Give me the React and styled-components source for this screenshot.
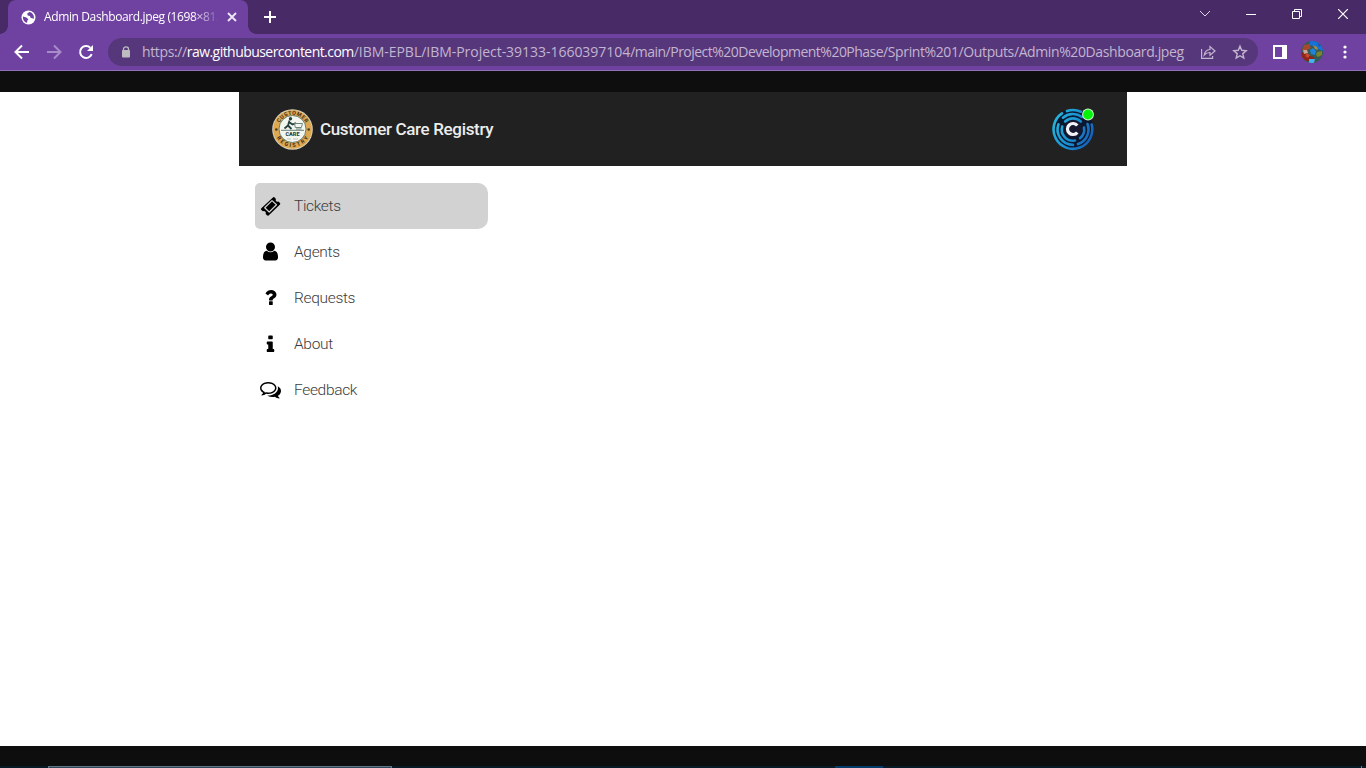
import React from 'react';
import styled, { createGlobalStyle } from 'styled-components';

const GlobalStyle = createGlobalStyle`
  * { box-sizing: border-box; }
  html, body { margin: 0; padding: 0; overflow: hidden; background: #0e0e0e; }
  svg { display: block; flex: none; }
`;

const Screen = styled.div`
  width: 1366px;
  height: 768px;
  display: flex;
  flex-direction: column;
  background: #0e0e0e;
  font-family: 'Open Sans', 'Noto Sans', sans-serif;
`;

const TabStrip = styled.div`
  height: 34px;
  flex: none;
  display: flex;
  align-items: flex-start;
  background: #472a66;
  padding-left: 8px;
`;

const Tab = styled.div`
  position: relative;
  width: 240px;
  height: 34px;
  display: flex;
  align-items: center;
  padding: 0 11px 0 13px;
  border-radius: 8px 8px 0 0;
  background: #6f42a1;

  &::before, &::after {
    content: '';
    position: absolute;
    bottom: 0;
    width: 8px;
    height: 8px;
  }
  &::before { left: -8px; background: radial-gradient(circle at 0 0, transparent 7.5px, #6f42a1 8px); }
  &::after { right: -8px; background: radial-gradient(circle at 100% 0, transparent 7.5px, #6f42a1 8px); }
`;

const TabTitle = styled.div`
  width: 173px;
  margin-left: 8px;
  margin-right: auto;
  overflow: hidden;
  white-space: nowrap;
  font-size: 12px;
  line-height: 18px;
  letter-spacing: -0.38px;
  color: #fff;
  mask-image: linear-gradient(to right, #000 86%, transparent 102%);
`;

const NewTab = styled.div`
  margin: 10px 0 0 15px;
`;

const WindowControls = styled.div`
  display: flex;
  align-items: center;
  margin-left: auto;
  height: 28px;
`;

const ControlButton = styled.div`
  width: 46px;
  display: flex;
  justify-content: center;
`;

const Toolbar = styled.div`
  height: 37px;
  flex: none;
  display: flex;
  align-items: center;
  padding: 0 19px 0 14px;
  background: #6f42a1;
  border-bottom: 1px solid #9270b8;
`;

const NavButtons = styled.div`
  display: flex;
  gap: 16px;
`;

const AddressBar = styled.div`
  width: 1150px;
  flex: none;
  height: 28px;
  margin-left: 14px;
  display: flex;
  align-items: center;
  padding: 0 10px 0 13px;
  border-radius: 14px;
  background: #57377b;
`;

const Url = styled.div`
  flex: 1;
  min-width: 0;
  margin-left: 11px;
  white-space: nowrap;
  font-size: 14px;
  line-height: 20px;
  color: #c2b5d0;
`;

const UrlPart = styled.span`
  letter-spacing: ${(p) => p.$tracking}px;
  color: ${(p) => (p.$host ? '#fff' : 'inherit')};
`;

const AddressActions = styled.div`
  display: flex;
  flex: none;
  gap: 16px;
`;

const ToolbarActions = styled.div`
  display: flex;
  align-items: center;
  margin-left: auto;
`;

const ToolIcon = styled.div`
  margin-left: ${(p) => p.$gap}px;
`;

const Viewport = styled.div`
  height: 654px;
  margin-top: 21px;
  flex: none;
  display: flex;
  justify-content: center;
  background: #fff;
`;

const Dashboard = styled.div`
  width: 888px;
  font-family: Roboto, sans-serif;
`;

const Header = styled.header`
  height: 74px;
  display: flex;
  align-items: center;
  padding: 0 32px 0 33px;
  background: #212121;
`;

const Brand = styled.div`
  margin-left: 7px;
  margin-right: auto;
  font-size: 17px;
  font-weight: 500;
  letter-spacing: -0.34px;
  color: #ececec;
`;

const Sidebar = styled.nav`
  width: 233.4px;
  margin: 17px 0 0 16px;
`;

const NavItem = styled.div`
  height: 46px;
  display: flex;
  align-items: center;
  padding-left: 5px;
  border-radius: 5px 10px 10px 5px;
  background: ${(p) => (p.$active ? '#d2d2d2' : 'transparent')};
  font-size: 15.5px;
  font-weight: 300;
  letter-spacing: -0.33px;
  color: #3c3c3c;
`;

const NavIcon = styled.span`
  padding-bottom: ${(p) => p.$lift}px;
`;

const NavLabel = styled.span`
  margin-left: 13px;
`;

const Taskbar = styled.div`
  height: 2px;
  margin-top: auto;
  display: flex;
  background: #061a28;
`;

const SearchEdge = styled.div`
  width: 344px;
  margin-left: 48px;
  background: #2b485c;
  border: 1px solid #617684;
  border-bottom: 0;
`;

const ActiveTask = styled.div`
  width: 48px;
  margin-left: 443px;
  background: #043c69;
`;

const TaskDivider = styled.div`
  width: 1px;
  margin-left: auto;
  margin-right: 4px;
  background: #71808a;
`;

const glyphs = {
  ticket:
    'M1024 452l316 316-572 572-316-316zM814 1482l668-668q19-19 19-45t-19-45l-362-362q-18-18-45-18t-45 18l-668 668q-19 19-19 45t19 45l362 362q18 18 45 18t45-18zm888-760l-907 908q-37 37-90.5 37t-90.5-37l-126-125q56-56 56-136t-56-136-136-56-136 56l-125-126q-37-37-37-90.5t37-90.5l907-906q37-37 90.5-37t90.5 37l125 125q-56 56-56 136t56 136 136 56 136-56l126 125q37 37 37 90.5t-37 90.5z',
  user:
    'M1536 1399q0 109-62.5 187t-150.5 78h-854q-88 0-150.5-78t-62.5-187q0-85 8.5-160.5t31.5-152 58.5-131 94-89 134.5-34.5q131 128 313 128t313-128q76 0 134.5 34.5t94 89 58.5 131 31.5 152 8.5 160.5zm-256-887q0 159-112.5 271.5t-271.5 112.5-271.5-112.5-112.5-271.5 112.5-271.5 271.5-112.5 271.5 112.5 112.5 271.5z',
  question:
    'M1088 1256v240q0 16-12 28t-28 12h-240q-16 0-28-12t-12-28v-240q0-16 12-28t28-12h240q16 0 28 12t12 28zm316-600q0 54-15.5 101t-35 76.5-55 59.5-57.5 43.5-61 35.5q-41 23-68.5 65t-27.5 67q0 17-12 32.5t-28 15.5h-240q-15 0-25.5-18.5t-10.5-37.5v-45q0-83 65-156.5t143-108.5q59-27 84-56t25-76q0-42-46.5-74t-107.5-32q-65 0-108 29-35 25-107 115-13 16-31 16-12 0-25-8l-164-125q-13-10-15.5-25t5.5-28q160-266 464-266 80 0 161 31t146 83 106 127.5 41 158.5z',
  info:
    'M1216 1344v128q0 26-19 45t-45 19h-512q-26 0-45-19t-19-45v-128q0-26 19-45t45-19h64v-384h-64q-26 0-45-19t-19-45v-128q0-26 19-45t45-19h384q26 0 45 19t19 45v576h64q26 0 45 19t19 45zm-128-1152v192q0 26-19 45t-45 19h-256q-26 0-45-19t-19-45v-192q0-26 19-45t45-19h256q26 0 45 19t19 45z',
  comments:
    'M704 384q-153 0-286 52t-211.5 141-78.5 191q0 82 53 158t149 132l97 56-35 84q34-20 62-39l44-31 53 10q78 14 153 14 153 0 286-52t211.5-141 78.5-191-78.5-191-211.5-141-286-52zm0-128q191 0 353.5 68.5t256.5 186.5 94 257-94 257-256.5 186.5-353.5 68.5q-86 0-176-16-124 88-278 128-36 9-86 16h-3q-11 0-20.5-8t-11.5-21q-1-3-1-6.5t.5-6.5 2-6l2.5-5 3.5-5.5 4-5 4.5-5 4-4.5q5-6 23-25t26-29.5 22.5-29 25-38.5 20.5-44q-124-72-195-177t-71-224q0-139 94-257t256.5-186.500 353.5-68.500zm822 1169q10 24 20.5 44t25 38.5 22.5 29 26 29.5 23 25q1 1 4 4.500t4.500 5 4 5 3.500 5.500l2.500 5 2 6 .5 6.500-1 6.500q-3 14-13 22t-22 7q-50-7-86-16-154-40-278-128-90 16-176 16-271 0-472-132 58 4 88 4 161 0 309-45t264-129q125-92 192-212t67-254q0-77-23-152 129 71 204 178t75 230q0 120-71 224.500t-195 176.500z',
};

const items = [
  { icon: 'ticket', label: 'Tickets', lift: 0 },
  { icon: 'user', label: 'Agents', lift: 1 },
  { icon: 'question', label: 'Requests', lift: 1 },
  { icon: 'info', label: 'About', lift: 0 },
  { icon: 'comments', label: 'Feedback', lift: 1 },
];

const TicketGlyph = () => (
  <svg width="21" height="21" viewBox="0 0 21 21">
    <path
      d="M13.200 1.300Q14 .8 14.700 1.500L15.900 2.900Q15.300 4.600 16.500 5.400 17.500 6 18.500 5.500L20 7Q20.600 7.700 20 8.500L8.600 19.400Q7.800 20 7 19.300L5.700 18Q6.200 16.600 5.200 15.600 4.200 14.800 2.800 15.300L1.200 13.800Q.5 13 1.300 12.200z"
      fill="#000"
    />
    <path d="M12 4.600 16.500 8.800 9.200 16 4.700 11.800z" fill="none" stroke="#d2d2d2" strokeWidth="1.200" strokeLinejoin="round" />
  </svg>
);

const NavGlyph = ({ name, lift }) => (
  <NavIcon $lift={lift}>
    {name === 'ticket' ? (
      <TicketGlyph />
    ) : (
      <svg width="21" height="21" viewBox="0 0 1792 1792">
        <path d={glyphs[name]} fill="#000" />
      </svg>
    )}
  </NavIcon>
);

const GlobeIcon = () => (
  <svg width="15" height="15" viewBox="0 0 15 15">
    <circle cx="7.5" cy="7.5" r="7" fill="#fff" />
    <path d="M2 6.500 5.300 7.400 7.400 9.200 6.400 10.600 6 13C3 12 1.600 9.500 2 6.500z" fill="#6f42a1" />
    <path d="M8.500 2 6.200 3.600 6.700 5.600 9 6 9.500 7.800 12.800 8.800C13.500 5.500 11.500 2.600 8.500 2z" fill="#6f42a1" />
  </svg>
);

const ArrowIcon = ({ color, flip }) => (
  <svg width="16" height="16" viewBox="0 0 16 16" fill="none" stroke={color} strokeWidth="2">
    <path d={flip ? 'M1 8h13M8 1.500 14.500 8 8 14.500' : 'M15 8H2M8 1.500 1.500 8 8 14.500'} />
  </svg>
);

const ReloadIcon = () => (
  <svg width="16" height="16" viewBox="0 0 16 16">
    <path d="M13.700 10.200A6 6 0 1 1 12.300 3.700" fill="none" stroke="#fff" strokeWidth="2" />
    <path d="M15 1v6H9z" fill="#fff" />
  </svg>
);

const LockIcon = () => (
  <svg width="10" height="12" viewBox="0 0 10 12">
    <path d="M2.500 5V3a2.500 2.200 0 0 1 5 0v2" fill="none" stroke="#bdbdc1" strokeWidth="1.300" />
    <rect x="1" y="4" width="8" height="7.500" rx="1" fill="#bdbdc1" />
  </svg>
);

const ShareIcon = () => (
  <svg width="16" height="16" viewBox="0 0 16 16" fill="none" stroke="#c2b5d0" strokeWidth="1.200">
    <path d="M1.600 5v9.400h11V12" />
    <path d="M4.200 11c.6-3.600 2.500-5.300 5.800-5.500V2.500L15 7l-5 4.200V8.500C7.500 8.500 5.600 9.300 4.200 11z" />
  </svg>
);

const StarIcon = () => (
  <svg width="16" height="16" viewBox="0 0 16 16">
    <path
      d="M8 2.200 9.700 6.300 14.200 6.700 10.800 9.600 11.800 14 8 11.700 4.200 14 5.200 9.600 1.800 6.700 6.300 6.300z"
      fill="none"
      stroke="#c2b5d0"
      strokeWidth="1.400"
    />
  </svg>
);

const PanelIcon = () => (
  <svg width="14" height="14" viewBox="0 0 14 14">
    <path d="M0 0h14v14H0zM2 2v10h7V2z" fill="#fff" fillRule="evenodd" />
  </svg>
);

const ProfilePicture = () => (
  <svg width="22" height="22" viewBox="0 0 22 22">
    <defs>
      <clipPath id="profileClip"><circle cx="11" cy="11" r="11" /></clipPath>
    </defs>
    <g clipPath="url(#profileClip)">
      <rect width="22" height="22" fill="#345b55" />
      <path d="M9 0h13v10l-5-2-4-3-5-1z" fill="#1672d8" />
      <path d="M0 12 4 11 9 15 13 16 14 20 6 20 1 17z" fill="#8f2417" />
      <path d="M3 4 8 3 10 7 6 9 1 9z" fill="#a64a2f" />
      <path d="M2 9h4l1 3-4 1z" fill="#c8a79a" />
      <path d="M9 9 12 7 15 10 14 14 10 13z" fill="#1d83dc" />
      <path d="M12 4 16 6 17 9 14 8z" fill="#a98a4e" />
      <path d="M16 11 21 10 21 14 17 16 15 14z" fill="#78852d" />
      <path d="M8 18 14 18 13 22H8z" fill="#42b4ee" />
      <path d="M6 12 9 14 7 17 4 15z" fill="#c7492c" />
      <path d="M16 2 18 6 20 4z" fill="#1559a8" />
    </g>
  </svg>
);

const MenuDots = () => (
  <svg width="4" height="14" viewBox="0 0 4 14" fill="#fff">
    <circle cx="2" cy="2" r="1.600" />
    <circle cx="2" cy="7" r="1.600" />
    <circle cx="2" cy="12" r="1.600" />
  </svg>
);

const RegistryLogo = () => (
  <svg width="41" height="42" viewBox="0 0 41 42">
    <defs>
      <path id="sealTop" d="M6.200 21a14.300 14.300 0 0 1 28.600 0" />
      <path id="sealBottom" d="M2.500 21a18 18 0 0 0 36 0" />
    </defs>
    <circle cx="20.500" cy="21.500" r="20.300" fill="#d8d2be" />
    <circle cx="20.500" cy="21.500" r="19.300" fill="#dda850" />
    <circle cx="20.500" cy="21" r="13.500" fill="#f3f6ef" stroke="#46675f" strokeWidth=".8" />
    <g fill="#3b3020" fontFamily="Roboto, sans-serif" fontWeight="700" fontSize="5.400" textAnchor="middle">
      <text><textPath href="#sealTop" startOffset="50%" textLength="32">CUSTOMER</textPath></text>
      <text><textPath href="#sealBottom" startOffset="50%" textLength="38">REGISTRY</textPath></text>
    </g>
    <circle cx="4.300" cy="21.500" r="1.300" fill="#4a3a20" />
    <circle cx="36.700" cy="21.500" r="1.300" fill="#4a3a20" />
    <circle cx="18.500" cy="10.800" r="1.700" fill="#27413d" />
    <path d="M17.500 12.500 16 17.500 12.500 20.500M17 14 20.500 16.500 24 15M16 17.500 19.500 21" fill="none" stroke="#27413d" strokeWidth="1.800" />
    <path d="M22.500 15.500h8l-1.200 4h-6zM24 21h5.500" fill="none" stroke="#6d8582" strokeWidth="1" />
    <path d="M9 22.300h23" stroke="#47645f" strokeWidth=".8" />
    <text x="20.500" y="28" fill="#244943" fontFamily="Roboto, sans-serif" fontWeight="900" fontSize="5.500" textAnchor="middle" textLength="14">CARE</text>
    <path d="M15 31h4M21 31h5" stroke="#a9b8ae" strokeWidth=".8" />
  </svg>
);

const UserAvatar = () => (
  <svg width="44" height="44" viewBox="0 0 44 44">
    <defs>
      <linearGradient id="rings" x1="0" y1="12" x2="44" y2="32" gradientUnits="userSpaceOnUse">
        <stop offset="0" stopColor="#27b9dc" />
        <stop offset=".5" stopColor="#1b8fce" />
        <stop offset="1" stopColor="#1559b4" />
      </linearGradient>
    </defs>
    <circle cx="22" cy="22.500" r="20.500" fill="#0b1730" />
    <g fill="none" stroke="url(#rings)" strokeWidth="2.600" strokeLinecap="round" transform="translate(0 .5)">
      <path d="M16 3.600A19.400 19.400 0 0 1 30 4.300M40.700 17A19.400 19.400 0 1 1 11 5.900" />
      <path d="M12 10.200A15.400 15.400 0 0 1 31 9.500M36.500 16.500A15.400 15.400 0 0 1 27 36.600M22 37.400A15.400 15.400 0 0 1 7.500 16.800" />
      <path d="M14.200 14A11.200 11.200 0 0 1 29.800 14M33 20A11.200 11.200 0 0 1 29 30.700M24 33A11.200 11.200 0 0 1 11.200 19" />
    </g>
    <circle cx="22" cy="22" r="8.800" fill="#17182f" />
    <path d="M26.300 18.600A5.500 5.500 0 1 0 26.300 25.400" fill="none" stroke="#f3f3f7" strokeWidth="3.200" />
    <circle cx="37" cy="7.500" r="5.900" fill="#d9f5d6" />
    <circle cx="37" cy="7.500" r="4.900" fill="#04f408" />
  </svg>
);

export default function App() {
  return (
    <Screen>
      <GlobalStyle />
      <TabStrip>
        <Tab>
          <GlobeIcon />
          <TabTitle>Admin Dashboard.jpeg (1698×812)</TabTitle>
          <svg width="10" height="10" viewBox="0 0 10 10" stroke="#eee8f5" strokeWidth="1.800">
            <path d="M1 1l8 8M9 1 1 9" />
          </svg>
        </Tab>
        <NewTab>
          <svg width="14" height="14" viewBox="0 0 14 14" fill="#fff">
            <path d="M6 1h2v5h5v2H8v5H6V8H1V6h5z" />
          </svg>
        </NewTab>
        <WindowControls>
          <ControlButton>
            <svg width="12" height="8" viewBox="0 0 12 8" fill="none" stroke="#ded7e6"><path d="M1 1l5 5 5-5" /></svg>
          </ControlButton>
          <ControlButton>
            <svg width="10" height="1" viewBox="0 0 10 1"><path d="M0 0h10v1H0z" fill="#fff" /></svg>
          </ControlButton>
          <ControlButton>
            <svg width="10" height="10" viewBox="0 0 10 10" fill="none" stroke="#fff">
              <path d="M.5 2.500h7v7h-7zM2.500 2.500v-2h7v7h-2" />
            </svg>
          </ControlButton>
          <ControlButton>
            <svg width="10" height="10" viewBox="0 0 10 10" stroke="#fff" strokeWidth="1.200"><path d="M0 0l10 10M10 0 0 10" /></svg>
          </ControlButton>
        </WindowControls>
      </TabStrip>
      <Toolbar>
        <NavButtons>
          <ArrowIcon color="#fff" />
          <ArrowIcon color="#a88bc9" flip />
          <ReloadIcon />
        </NavButtons>
        <AddressBar>
          <LockIcon />
          <Url>
            <UrlPart $tracking={-0.37}>https://</UrlPart>
            <UrlPart $tracking={-0.55} $host>raw.githubusercontent.com</UrlPart>
            <UrlPart $tracking={-0.03}>/IBM-EPBL/IBM-Project-39133-1660397104</UrlPart>
            <UrlPart $tracking={-0.52}>/main/Project%20Development%20Phase</UrlPart>
            <UrlPart $tracking={-0.39}>/Sprint%201/Outputs/Admin%20Dashboard.jpeg</UrlPart>
          </Url>
          <AddressActions>
            <ShareIcon />
            <StarIcon />
          </AddressActions>
        </AddressBar>
        <ToolbarActions>
          <PanelIcon />
          <ToolIcon $gap={14}><ProfilePicture /></ToolIcon>
          <ToolIcon $gap={20}><MenuDots /></ToolIcon>
        </ToolbarActions>
      </Toolbar>
      <Viewport>
        <Dashboard>
          <Header>
            <RegistryLogo />
            <Brand>Customer Care Registry</Brand>
            <UserAvatar />
          </Header>
          <Sidebar>
            {items.map(({ icon, label, lift }, index) => (
              <NavItem key={label} $active={index === 0}>
                <NavGlyph name={icon} lift={lift} />
                <NavLabel>{label}</NavLabel>
              </NavItem>
            ))}
          </Sidebar>
        </Dashboard>
      </Viewport>
      <Taskbar>
        <SearchEdge />
        <ActiveTask />
        <TaskDivider />
      </Taskbar>
    </Screen>
  );
}
